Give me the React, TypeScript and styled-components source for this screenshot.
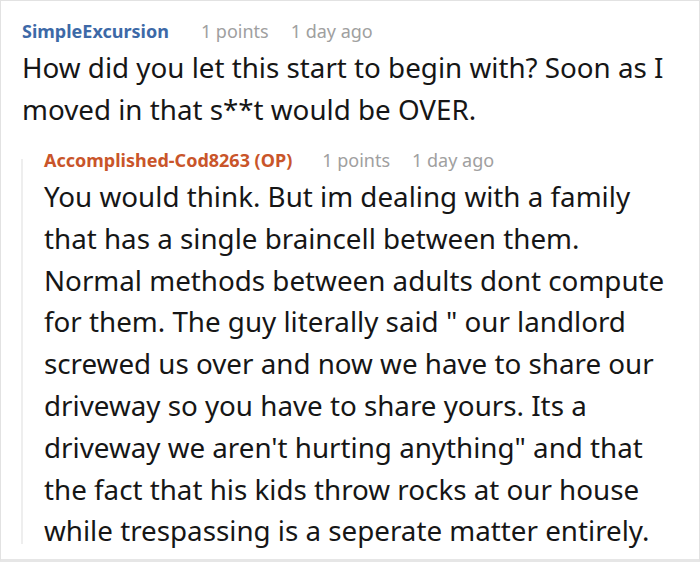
import React from "react";
import styled, { createGlobalStyle } from "styled-components";

const Global = createGlobalStyle`
  html, body { margin: 0; padding: 0; background: #ffffff; }
  body { font-family: "Noto Sans", "Open Sans", sans-serif; }
`;

const Frame = styled.div`
  box-sizing: border-box;
  width: 700px;
  height: 562px;
  border: 1px solid #e2e2e2;
  border-bottom: 3px solid #e6e6e6;
  background: #fff;
  padding: 16px 31px 0 21px;
  overflow: hidden;
`;

const Meta = styled.div`
  display: flex;
  align-items: baseline;
  font-family: "Noto Sans", sans-serif;
  font-size: 18px;
  line-height: 28px;
  gap: 22px;
  white-space: nowrap;
`;

const Author = styled.span<{ $color: string; $after: number }>`
  font-weight: 700;
  color: ${(p) => p.$color};
  margin-right: ${(p) => p.$after}px;
`;

const Info = styled.span`
  color: #a0a0a0;
`;

const Body = styled.p<{ $lh: number; $top: number }>`
  margin: ${(p) => p.$top}px 0 0;
  font-family: "Noto Sans", sans-serif;
  font-size: 27.75px;
  line-height: ${(p) => p.$lh}px;
  color: #161616;
`;

const Reply = styled.div`
  position: relative;
  margin-top: 16px;
  padding-left: 22px;

  &::before {
    content: "";
    position: absolute;
    left: -1px;
    top: 13px;
    bottom: 8px;
    width: 2px;
    background: #eeeeee;
  }
`;

export default function App() {
  return (
    <>
      <Global />
      <Frame>
        <Meta>
          <Author $color="#3d69a7" $after={10}>SimpleExcursion</Author>
          <Info>1 points</Info>
          <Info>1 day ago</Info>
        </Meta>
        <Body $lh={42} $top={1}>
          How did you let this start to begin with? Soon as I moved in that s**t would be OVER.
        </Body>
        <Reply>
          <Meta>
            <Author $color="#c9552a" $after={8}>Accomplished-Cod8263 (OP)</Author>
            <Info>1 points</Info>
            <Info>1 day ago</Info>
          </Meta>
          <Body $lh={41.8} $top={2}>
            You would think. But im dealing with a family that has a single braincell between them. Normal methods between adults dont compute for them. The guy literally said " our landlord screwed us over and now we have to share our driveway so you have to share yours. Its a driveway we aren't hurting anything" and that the fact that his kids throw rocks at our house while trespassing is a seperate matter entirely.
          </Body>
        </Reply>
      </Frame>
    </>
  );
}
